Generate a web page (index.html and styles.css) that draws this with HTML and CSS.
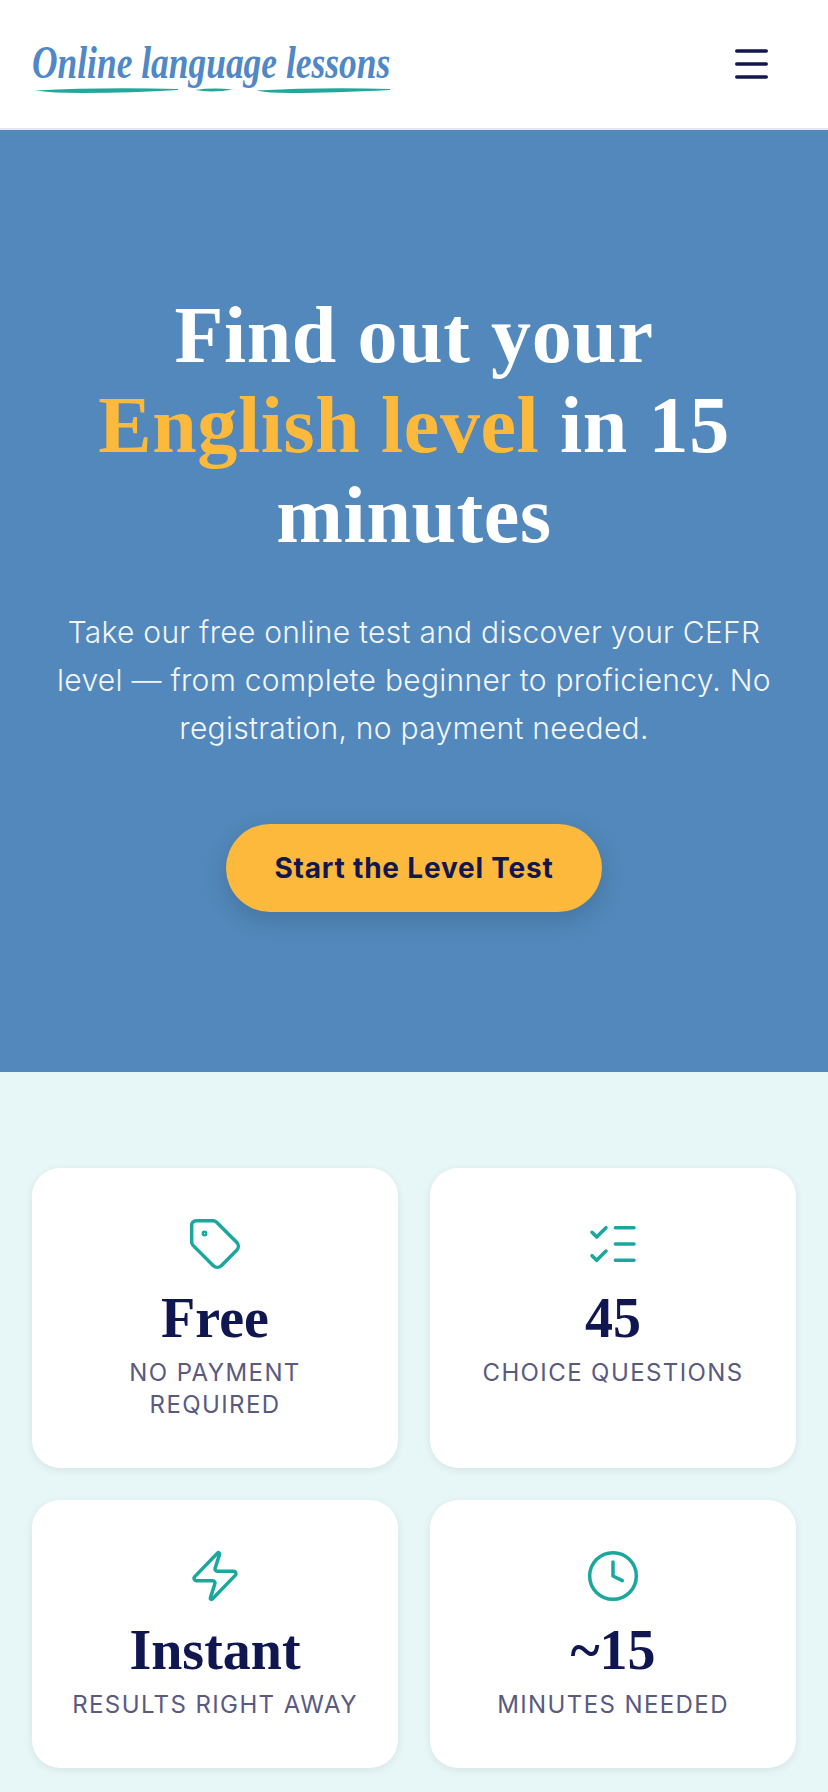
FILE: index.html
```html
<!DOCTYPE html>
<html lang="en">
<head>
  <meta charset="UTF-8" />
  <title>Find out your English level - Online language lessons</title>
  <link rel="stylesheet" href="styles.css">
</head>
<body>

  <header class="topbar">
    <a class="logo" href="#">
      <span class="logo-text">Online language lessons</span>
      <svg class="logo-brush" viewBox="0 0 360 8" aria-hidden="true">
        <path d="M3 4.5 Q70 1 146 3 L146 4 Q100 7 50 7 Q20 7 3 4.5Z" />
        <path d="M163 4 Q180 1.5 201 3.5 Q180 7 163 4Z" />
        <path d="M224 4.5 Q290 1 358 3 L358 4 Q300 7 260 7 Q235 7 224 4.5Z" />
      </svg>
    </a>
    <button class="menu-btn" aria-label="Menu">
      <svg viewBox="0 0 33 30" fill="none" stroke="currentColor" stroke-width="3.5" stroke-linecap="round">
        <path d="M1.75 2h29.5M1.75 15h29.5M1.75 28h29.5" />
      </svg>
    </button>
  </header>

  <section class="hero">
    <h1>Find out your <span class="accent">English level</span> in 15 minutes</h1>
    <p>Take our free online test and discover your CEFR level — from complete beginner to proficiency. No registration, no payment needed.</p>
    <a class="cta" href="#">Start the Level Test</a>
  </section>

  <section class="features">
    <div class="card">
      <svg class="icon" viewBox="0 0 24 24">
        <path d="M12.586 2.586A2 2 0 0 0 11.172 2H4a2 2 0 0 0-2 2v7.172a2 2 0 0 0 .586 1.414l8.704 8.704a2.426 2.426 0 0 0 3.42 0l6.58-6.58a2.426 2.426 0 0 0 0-3.42z" />
        <circle cx="7.5" cy="7.5" r=".5" />
      </svg>
      <div class="value">Free</div>
      <div class="label">No payment required</div>
    </div>
    <div class="card">
      <svg class="icon" viewBox="0 0 24 24">
        <path d="M13 5h8M13 12h8M13 19h8M3 7l2 2 4-4M3 17l2 2 4-4" />
      </svg>
      <div class="value">45</div>
      <div class="label">Choice questions</div>
    </div>
    <div class="card">
      <svg class="icon" viewBox="0 0 24 24">
        <path d="M4 14a1 1 0 0 1-.78-1.63l9.9-10.2a.5.5 0 0 1 .86.46l-1.92 6.02A1 1 0 0 0 13 10h7a1 1 0 0 1 .78 1.63l-9.9 10.2a.5.5 0 0 1-.86-.46l1.92-6.02A1 1 0 0 0 11 14z" />
      </svg>
      <div class="value">Instant</div>
      <div class="label">Results right away</div>
    </div>
    <div class="card">
      <svg class="icon" viewBox="0 0 24 24">
        <circle cx="12" cy="12" r="10" />
        <path d="M12 6v6l4 2" />
      </svg>
      <div class="value">~15</div>
      <div class="label">Minutes needed</div>
    </div>
  </section>

</body>
</html>
```

FILE: styles.css
```css
* {
  box-sizing: border-box;
}
body {
  margin: 0;
  font-family: Inter, 'Liberation Sans', sans-serif;
  background: #e7f6f7;
  color: #12174d;
}
.topbar {
  display: flex;
  align-items: center;
  justify-content: space-between;
  height: 130px;
  padding: 0 60px 0 32px;
  background: #fff;
  border-bottom: 2px solid #e2e8f0;
}
.logo {
  display: flex;
  flex-direction: column;
  width: 360px;
  text-decoration: none;
}
.logo-text {
  display: block;
  margin: 3px 0 -3px;
  font-family: 'Liberation Serif', serif;
  font-style: italic;
  font-weight: 700;
  font-size: 46px;
  line-height: 52px;
  color: #5087c6;
  white-space: nowrap;
  transform: scaleX(0.77);
  transform-origin: left center;
}
.logo-brush {
  display: block;
  width: 360px;
  height: 8px;
  fill: #1fa89b;
}
.menu-btn {
  display: block;
  width: 33px;
  height: 30px;
  padding: 0;
  border: 0;
  background: none;
  color: #12174d;
}
.menu-btn svg {
  display: block;
  width: 33px;
  height: 30px;
}
.hero {
  display: flex;
  flex-direction: column;
  align-items: center;
  padding: 160px 48px;
  background: #5288bb;
  color: #fff;
  text-align: center;
}
.hero h1 {
  max-width: 680px;
  margin: 0 0 48px;
  font-family: 'Liberation Serif', serif;
  font-size: 80px;
  line-height: 90px;
  font-weight: 700;
  letter-spacing: 0.6px;
}
.accent {
  color: #fdb93c;
}
.hero p {
  margin: 0 0 72px;
  font-size: 30px;
  line-height: 48px;
  font-weight: 300;
  letter-spacing: 0.27px;
  color: #f2f6fa;
}
.cta {
  display: block;
  padding: 0 48px;
  height: 88px;
  line-height: 88px;
  border-radius: 44px;
  background: #fdb93c;
  color: #12174d;
  font-size: 28px;
  font-weight: 700;
  letter-spacing: 0.8px;
  text-decoration: none;
  box-shadow: 0 8px 24px rgba(0,0,0,0.15);
}
.features {
  display: grid;
  grid-template-columns: 1fr 1fr;
  gap: 32px;
  padding: 96px 32px 32px;
}
.card {
  display: flex;
  flex-direction: column;
  align-items: center;
  padding: 48px 32px 47px;
  background: #fff;
  border-radius: 28px;
  box-shadow: 0 2px 8px rgba(0,0,0,0.08);
  text-align: center;
}
.icon {
  width: 56px;
  height: 56px;
  margin-bottom: 12px;
  fill: none;
  stroke: #19a79e;
  stroke-width: 1.5;
  stroke-linecap: round;
  stroke-linejoin: round;
}
.value {
  margin-bottom: 5px;
  font-family: 'Liberation Serif', serif;
  font-size: 56px;
  line-height: 68px;
  font-weight: 700;
  color: #0f1650;
}
.label {
  font-size: 24px;
  line-height: 32px;
  letter-spacing: 1.4px;
  text-transform: uppercase;
  color: #5a5a80;
}
```
